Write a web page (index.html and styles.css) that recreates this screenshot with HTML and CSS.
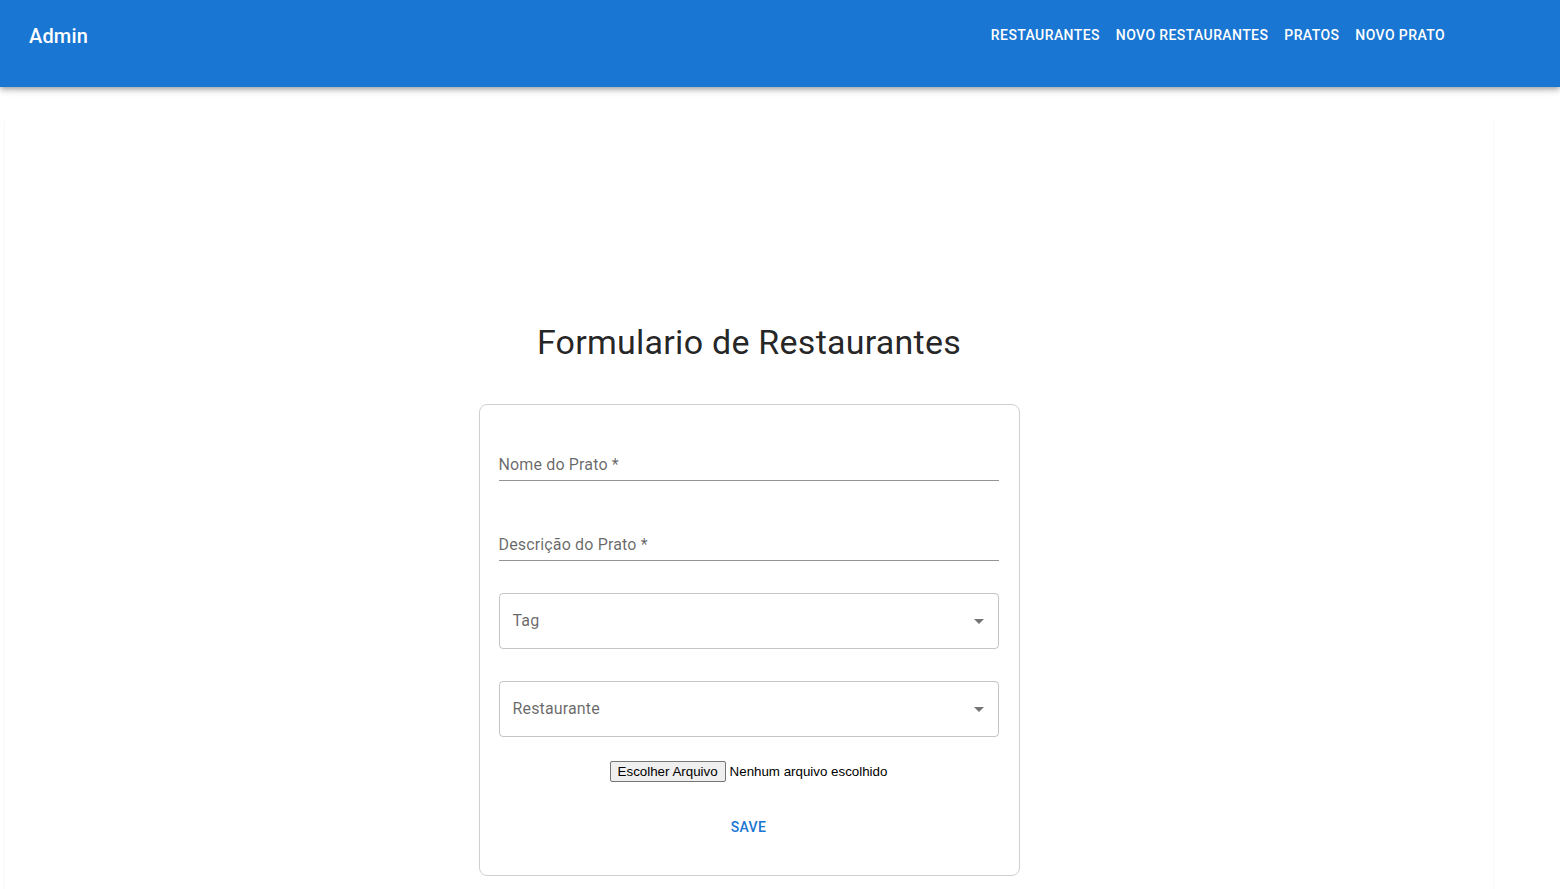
FILE: index.html
```html
<!DOCTYPE html>
<html lang="pt-BR">
<head>
<meta charset="utf-8">
<title>Admin</title>
<link rel="stylesheet" href="styles.css">
</head>
<body>
<header class="appbar">
  <div class="brand">Admin</div>
  <nav class="nav">
    <a class="nav-btn">Restaurantes</a>
    <a class="nav-btn">Novo Restaurantes</a>
    <a class="nav-btn">Pratos</a>
    <a class="nav-btn">Novo Prato</a>
  </nav>
</header>
<main class="paper">
  <h1 class="title">Formulario de Restaurantes</h1>
  <form class="form-box">
    <div class="text-field">
      <label class="tf-label">Nome do Prato *</label>
      <div class="tf-input"></div>
    </div>
    <div class="text-field">
      <label class="tf-label">Descrição do Prato *</label>
      <div class="tf-input"></div>
    </div>
    <div class="select">
      <span class="select-label">Tag</span>
      <svg class="select-icon" viewBox="0 0 24 24" width="24" height="24"><path d="M7 10l5 5 5-5z"/></svg>
    </div>
    <div class="select">
      <span class="select-label">Restaurante</span>
      <svg class="select-icon" viewBox="0 0 24 24" width="24" height="24"><path d="M7 10l5 5 5-5z"/></svg>
    </div>
    <div class="file-row">
      <span class="file-btn">Escolher Arquivo</span>
      <span class="file-text">Nenhum arquivo escolhido</span>
    </div>
    <div class="save-row">
      <span class="save-btn">Save</span>
    </div>
  </form>
</main>
</body>
</html>
```
FILE: styles.css
```css
* { box-sizing: border-box; }
html, body { margin: 0; padding: 0; background: #fff; }
body {
  font-family: Roboto, "Liberation Sans", Arial, sans-serif;
  color: rgba(0,0,0,0.87);
  height: 889px;
  overflow: hidden;
}
.appbar {
  height: 87px;
  background: #1976d2;
  color: #fff;
  display: flex;
  justify-content: space-between;
  align-items: flex-start;
  padding: 0 107px 0 29px;
  box-shadow: 0 2px 4px -1px rgba(0,0,0,0.2), 0 4px 5px 0 rgba(0,0,0,0.14), 0 1px 10px 0 rgba(0,0,0,0.12);
  position: relative;
  z-index: 2;
}
.brand {
  font-size: 20px;
  font-weight: 500;
  line-height: 32px;
  letter-spacing: 0.0075em;
  margin-top: 20px;
}
.nav { display: flex; margin-top: 17px; }
.nav-btn {
  font-size: 14px;
  font-weight: 500;
  line-height: 24.5px;
  letter-spacing: 0.02857em;
  text-transform: uppercase;
  padding: 6px 8px;
  color: #fff;
}
.paper {
  margin: 31px 0 0 5px;
  width: 1488px;
  height: 800px;
  background: #fff;
  border-radius: 4px;
  box-shadow: 0 2px 1px -1px rgba(0,0,0,0.12), 0 1px 1px 0 rgba(0,0,0,0.06), 0 1px 3px 0 rgba(0,0,0,0.06);
  display: flex;
  flex-direction: column;
  align-items: center;
  padding-top: 203px;
}
.title {
  margin: 0 0 41px;
  font-size: 34px;
  font-weight: 400;
  line-height: 42px;
  letter-spacing: 0.00735em;
  color: rgba(0,0,0,0.87);
}
.form-box {
  width: 541px;
  border: 1px solid #cfcfcf;
  border-radius: 8px;
  padding: 28px 20px 30px 19px;
  display: flex;
  flex-direction: column;
}
.text-field {
  height: 48px;
  padding-top: 16px;
  margin-bottom: 32px;
}
.tf-input {
  height: 32px;
  border-bottom: 1px solid rgba(0,0,0,0.42);
  margin-top: -32px;
}
.tf-label {
  display: block;
  height: 32px;
  padding-top: 4px;
  font-size: 16px;
  line-height: 23px;
  letter-spacing: 0.00938em;
  color: rgba(0,0,0,0.6);
}
.select {
  height: 56px;
  border: 1px solid rgba(0,0,0,0.23);
  border-radius: 4px;
  display: flex;
  align-items: center;
  justify-content: space-between;
  padding: 0 7px 1px 13px;
  margin-bottom: 32px;
}
.select + .select { margin-bottom: 24px; }
.select-label {
  font-size: 16px;
  line-height: 23px;
  letter-spacing: 0.00938em;
  color: rgba(0,0,0,0.6);
}
.select-icon { fill: rgba(0,0,0,0.54); }
.file-row {
  display: flex;
  justify-content: center;
  align-items: center;
  height: 21px;
  font-family: "Liberation Sans", Arial, sans-serif;
  font-size: 13.33px;
  color: #000;
  margin-bottom: 27px;
}
.file-btn {
  display: inline-block;
  height: 21px;
  line-height: 19px;
  padding: 0 7px;
  background: #efefef;
  border: 1px solid #767676;
  border-radius: 2px;
  margin-right: 4px;
}
.save-row {
  display: flex;
  justify-content: center;
  height: 36px;
  align-items: center;
}
.save-btn {
  font-size: 14px;
  font-weight: 500;
  letter-spacing: 0.02857em;
  text-transform: uppercase;
  color: #1976d2;
  padding: 6px 8px;
  line-height: 24.5px;
}
```
